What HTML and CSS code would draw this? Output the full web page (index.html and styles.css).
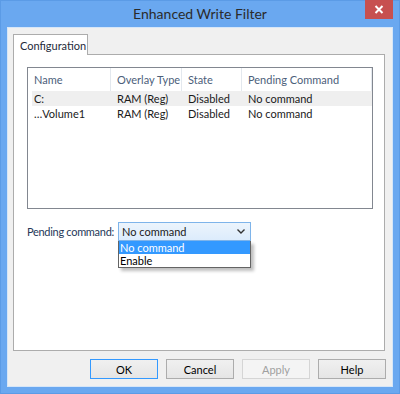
FILE: index.html
```html
<!DOCTYPE html>
<html lang="en">
<head>
    <meta charset="UTF-8">
    <title>Enhanced Write Filter</title>
    <link rel="stylesheet" href="styles.css">
</head>
<body>
    <div class="window">
        <div class="title-bar">
            <span></span>
            <div class="title">Enhanced Write Filter</div>
            <button class="close-button">
                <svg width="10" height="9" viewBox="0 0 10 9">
                    <path d="M1.5 1 L8.5 8 M8.5 1 L1.5 8" stroke="#fff" stroke-width="2"/>
                </svg>
            </button>
        </div>

        <div class="client">
            <div class="tab-strip">
                <div class="tab">Configuration</div>
            </div>

            <div class="tab-panel">
                <div class="list-view">
                    <div class="list-header">
                        <div class="col">Name</div>
                        <div class="col">Overlay Type</div>
                        <div class="col">State</div>
                        <div class="col">Pending Command</div>
                    </div>
                    <div class="list-row selected">
                        <div class="col">C:</div>
                        <div class="col">RAM (Reg)</div>
                        <div class="col">Disabled</div>
                        <div class="col">No command</div>
                    </div>
                    <div class="list-row">
                        <div class="col">…Volume1</div>
                        <div class="col">RAM (Reg)</div>
                        <div class="col">Disabled</div>
                        <div class="col">No command</div>
                    </div>
                </div>

                <div class="command-row">
                    <label class="command-label">Pending command:</label>
                    <div class="combo">
                        <div class="combo-box">
                            <span>No command</span>
                            <svg width="8" height="5" viewBox="0 0 8 5">
                                <path d="M0.5 0.5 L4 4 L7.5 0.5" fill="none" stroke="#333" stroke-width="1.4"/>
                            </svg>
                        </div>
                        <ul class="combo-list">
                            <li class="active">No command</li>
                            <li>Enable</li>
                        </ul>
                    </div>
                </div>
            </div>

            <div class="button-row">
                <button class="dialog-button default">OK</button>
                <button class="dialog-button">Cancel</button>
                <button class="dialog-button" disabled>Apply</button>
                <button class="dialog-button">Help</button>
            </div>
        </div>
    </div>
</body>
</html>
```

FILE: styles.css
```css
body {
    margin: 0;
    background-color: #6aa8f0;
    font-family: 'Lato', 'Open Sans', sans-serif;
    font-size: 11px;
    white-space: nowrap;
}

.window {
    width: 400px;
    height: 394px;
    display: flex;
    flex-direction: column;
    background-color: #6aa8f0;
    box-shadow: inset 0 0 0 1px #5b9be6;
}

.title-bar {
    height: 27px;
    display: grid;
    grid-template-columns: 1fr auto 1fr;
}

.title {
    font-size: 14px;
    color: #2b2b2b;
    line-height: 27px;
}

.close-button {
    justify-self: end;
    width: 28px;
    height: 19px;
    margin-right: 7px;
    padding: 0;
    border: none;
    background: #c75050;
    display: flex;
    justify-content: center;
    align-items: center;
}

.client {
    flex: 1;
    margin: 0 7px 7px 7px;
    border: 1px solid #d6e6f8;
    background-color: #f0f0f0;
    padding: 6px 6px 7px 5px;
    display: flex;
    flex-direction: column;
}

.tab-strip {
    height: 20px;
    display: flex;
}

.tab {
    position: relative;
    z-index: 1;
    width: 75px;
    height: 21px;
    box-sizing: border-box;
    border: 1px solid #acacac;
    border-bottom: none;
    background: #fff;
    padding: 4px 0 0 6px;
    color: #1e2a3a;
}

.tab-panel {
    flex: 1;
    margin-right: 1px;
    border: 1px solid #acacac;
    background: #fff;
    padding: 12px 11px 0 13px;
}

.list-view {
    height: 142px;
    box-sizing: border-box;
    border: 1px solid #828790;
    background: #fff;
    overflow: hidden;
}

.list-header {
    height: 23px;
    display: grid;
    grid-template-columns: 83px 71px 60px 130px;
    color: #4c607a;
}

.list-header .col {
    border-right: 1px solid #e3e8ee;
    line-height: 24px;
    padding-left: 6px;
    overflow: hidden;
}

.list-row {
    height: 15px;
    margin-left: 4px;
    display: grid;
    grid-template-columns: 79px 71px 60px 130px;
    line-height: 15px;
    color: #1a1a1a;
}

.list-row .col {
    padding-left: 6px;
    overflow: hidden;
}

.list-row .col:first-child {
    padding-left: 2px;
}

.list-row.selected {
    background: #efefef;
}

.command-row {
    margin-top: 13px;
    display: flex;
    align-items: center;
}

.command-label {
    width: 91px;
    color: #253858;
    letter-spacing: -0.3px;
}

.combo {
    position: relative;
}

.combo-box {
    width: 133px;
    height: 19px;
    box-sizing: border-box;
    border: 1px solid #7eb4ea;
    background: linear-gradient(#ecf4fc, #dcecfc);
    padding: 0 5px 0 3px;
    display: flex;
    justify-content: space-between;
    align-items: center;
    color: #1a1a1a;
}

.combo-list {
    position: absolute;
    top: 100%;
    left: 0;
    width: 133px;
    box-sizing: border-box;
    margin: 0;
    padding: 0;
    list-style: none;
    border: 1px solid #646464;
    border-top: none;
    background: #fff;
    box-shadow: 3px 3px 3px rgba(0, 0, 0, 0.25);
}

.combo-list li {
    height: 13px;
    line-height: 13px;
    padding-left: 1px;
    color: #000;
}

.combo-list li.active {
    background: #3399ff;
    color: #fff;
}

.button-row {
    margin-top: 8px;
    display: flex;
    justify-content: flex-end;
    gap: 8px;
}

.dialog-button {
    width: 68px;
    height: 20px;
    padding: 0;
    border: 1px solid #acacac;
    background: linear-gradient(#f0f0f0, #e5e5e5);
    font-family: inherit;
    font-size: 11px;
    color: #000;
}

.dialog-button.default {
    border-color: #3399ff;
}

.dialog-button:disabled {
    border-color: #d5d5d5;
    background: #f4f4f4;
    color: #a0a0a0;
}
```
